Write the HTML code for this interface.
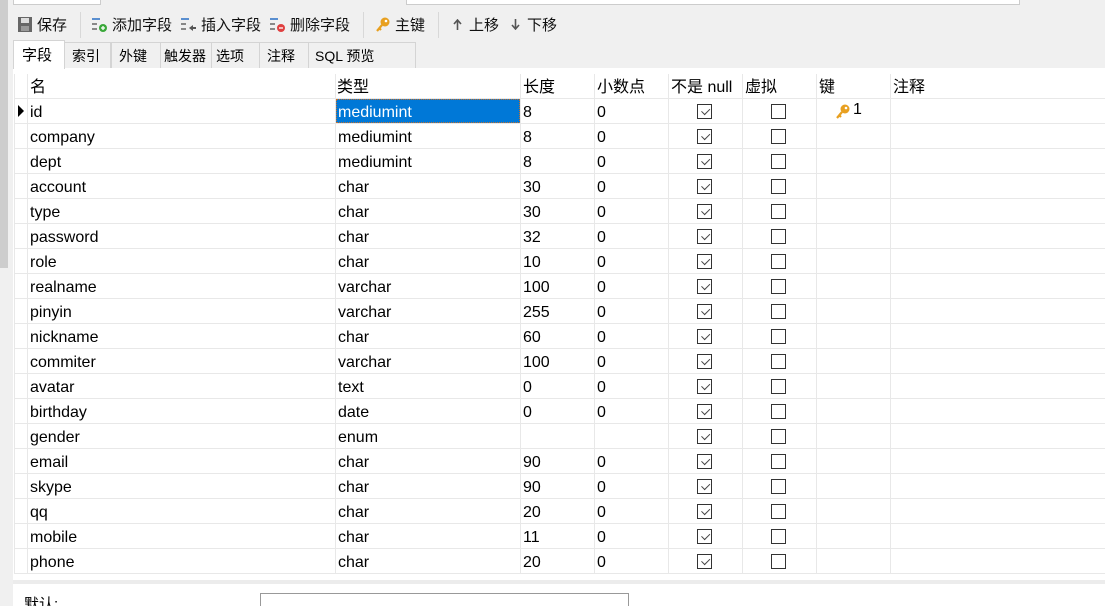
<!DOCTYPE html>
<html><head><meta charset="utf-8"><style>
*{margin:0;padding:0;box-sizing:border-box}
html,body{width:1105px;height:606px;overflow:hidden}
body{background:#f0f0f0;font-family:"Segoe UI","Liberation Sans","Noto Sans CJK SC",sans-serif;font-size:15px;color:#000;position:relative}
.a{position:absolute}
.tb{position:absolute;top:14px;font-size:15px;white-space:nowrap;color:#111}
.sep{position:absolute;top:12px;width:1px;height:26px;background:#d8d8d8}
.tab{position:absolute;top:42px;height:26px;border:1px solid #d4d4d4;border-bottom:none;background:#f0f0f0;padding:3px 0 0 7px;font-size:14px;white-space:nowrap;overflow:hidden}
.grid{position:absolute;left:13px;top:68px;width:1092px;height:506px;background:#fff}
.row{position:absolute;left:14px;width:1091px;height:25px;border-bottom:1px solid #e8e8e8;font-size:16px}
.c{position:absolute;top:5px;white-space:nowrap;line-height:18px}
.v{position:absolute;top:74px;width:1px;height:499px;background:#e8e8e8}
.cb{position:absolute;width:15px;height:15px;border:1px solid #333;background:#fff}
.ck::after{content:"";position:absolute;left:3px;top:1px;width:7px;height:4px;border-left:1.3px solid #444;border-bottom:1.3px solid #444;transform:rotate(-45deg) translate(-1px,2px)}
</style></head><body>
<div class="a" style="left:0;top:0;width:8px;height:268px;background:#cdcdcd"></div>
<div class="a" style="left:13px;top:0;width:88px;height:5px;background:#fff;border:1px solid #ccc;border-top:none"></div>
<div class="a" style="left:406px;top:0;width:614px;height:5px;background:#fff;border:1px solid #ccc;border-top:none"></div>

<svg class="a" style="left:18px;top:17px" width="14" height="15"><rect x="0" y="0" width="14" height="15" fill="#666"/><rect x="3" y="1" width="8" height="5" fill="#ddd"/><rect x="3" y="9" width="8" height="5" fill="#999"/></svg>
<div class="tb" style="left:37px">保存</div>
<div class="sep" style="left:80px"></div>
<svg class="a" style="left:92px;top:17px" width="16" height="16"><rect x="0" y="1" width="8" height="2" fill="#5a8fd0"/><rect x="0" y="6" width="5" height="2" fill="#888"/><rect x="0" y="11" width="5" height="2" fill="#888"/><circle cx="11" cy="11" r="4" fill="#3aa83a"/><path d="M9 11h4M11 9v4" stroke="#fff" stroke-width="1.3"/></svg>
<div class="tb" style="left:112px">添加字段</div>
<svg class="a" style="left:181px;top:17px" width="16" height="16"><rect x="0" y="1" width="8" height="2" fill="#5a8fd0"/><rect x="0" y="6" width="5" height="2" fill="#888"/><rect x="0" y="11" width="5" height="2" fill="#888"/><path d="M8 11l4-3v6z" fill="#555"/><rect x="11" y="10" width="4" height="2" fill="#555"/></svg>
<div class="tb" style="left:201px">插入字段</div>
<svg class="a" style="left:270px;top:17px" width="16" height="16"><rect x="0" y="1" width="8" height="2" fill="#5a8fd0"/><rect x="0" y="6" width="5" height="2" fill="#888"/><rect x="0" y="11" width="5" height="2" fill="#888"/><circle cx="11" cy="11" r="4" fill="#e04040"/><path d="M9 11h4" stroke="#fff" stroke-width="1.3"/></svg>
<div class="tb" style="left:290px">删除字段</div>
<div class="sep" style="left:363px"></div>
<svg class="a" style="left:376px;top:17px" width="14" height="16"><circle cx="9" cy="5" r="4.5" fill="#e8a020"/><circle cx="10" cy="4" r="1.3" fill="#fff"/><path d="M6 8l-5 6M3 11l2 2" stroke="#e8a020" stroke-width="2.2"/></svg>
<div class="tb" style="left:395px">主键</div>
<div class="sep" style="left:438px"></div>
<svg class="a" style="left:453px;top:19px" width="9" height="11"><path d="M4.5 1v10M1 5l3.5-4 3.5 4" stroke="#555" stroke-width="1.6" fill="none"/></svg>
<div class="tb" style="left:469px">上移</div>
<svg class="a" style="left:511px;top:19px" width="9" height="11"><path d="M4.5 0v10M1 6l3.5 4 3.5-4" stroke="#555" stroke-width="1.6" fill="none"/></svg>
<div class="tb" style="left:527px">下移</div>

<div class="tab" style="left:64px;width:47px">索引</div>
<div class="tab" style="left:111px;width:50px">外键</div>
<div class="tab" style="left:160px;width:52px;padding-left:3px">触发器</div>
<div class="tab" style="left:211px;width:49px;padding-left:4px">选项</div>
<div class="tab" style="left:259px;width:50px;padding-left:7px">注释</div>
<div class="tab" style="left:308px;width:108px;padding-left:6px">SQL 预览</div>
<div class="a" style="left:13px;top:40px;width:52px;height:29px;background:#fff;border:1px solid #d4d4d4;border-bottom:none;padding:3px 0 0 8px;z-index:2">字段</div>

<div class="grid"></div>
<div class="row" style="top:74px">
<div class="c" style="left:16px">名</div><div class="c" style="left:323px">类型</div><div class="c" style="left:509px">长度</div><div class="c" style="left:583px">小数点</div><div class="c" style="left:657px">不是 null</div><div class="c" style="left:731px">虚拟</div><div class="c" style="left:805px">键</div><div class="c" style="left:879px">注释</div>
</div>
<div class="v" style="left:27px"></div>
<div class="v" style="left:335px"></div><div class="v" style="left:520px"></div><div class="v" style="left:594px"></div><div class="v" style="left:668px"></div><div class="v" style="left:742px"></div><div class="v" style="left:816px"></div><div class="v" style="left:890px"></div>
<div class="a" style="left:14px;top:74px;width:1px;height:499px;background:#e8e8e8"></div>

<svg class="a" style="left:18px;top:105px" width="6" height="12"><path d="M0 0L6 6L0 12z" fill="#000"/></svg>
<div class="a" style="left:336px;top:99px;width:184px;height:24px;background:#0078d7;border:1px dotted #c07030"></div>

<div class="row" style="top:99px"><div class="c" style="left:16px">id</div><div class="c" style="left:324px;color:#fff">mediumint</div><div class="c" style="left:509px">8</div><div class="c" style="left:583px">0</div>
<svg class="a" style="left:822px;top:5px" width="14" height="16"><circle cx="9" cy="5" r="4.5" fill="#e8a020"/><circle cx="10" cy="4" r="1.3" fill="#fff"/><path d="M6 8l-5 6M3 11l2 2" stroke="#e8a020" stroke-width="2.2"/></svg><div class="c" style="left:839px;top:2px">1</div></div>
<div class="row" style="top:124px"><div class="c" style="left:16px">company</div><div class="c" style="left:324px">mediumint</div><div class="c" style="left:509px">8</div><div class="c" style="left:583px">0</div></div>
<div class="row" style="top:149px"><div class="c" style="left:16px">dept</div><div class="c" style="left:324px">mediumint</div><div class="c" style="left:509px">8</div><div class="c" style="left:583px">0</div></div>
<div class="row" style="top:174px"><div class="c" style="left:16px">account</div><div class="c" style="left:324px">char</div><div class="c" style="left:509px">30</div><div class="c" style="left:583px">0</div></div>
<div class="row" style="top:199px"><div class="c" style="left:16px">type</div><div class="c" style="left:324px">char</div><div class="c" style="left:509px">30</div><div class="c" style="left:583px">0</div></div>
<div class="row" style="top:224px"><div class="c" style="left:16px">password</div><div class="c" style="left:324px">char</div><div class="c" style="left:509px">32</div><div class="c" style="left:583px">0</div></div>
<div class="row" style="top:249px"><div class="c" style="left:16px">role</div><div class="c" style="left:324px">char</div><div class="c" style="left:509px">10</div><div class="c" style="left:583px">0</div></div>
<div class="row" style="top:274px"><div class="c" style="left:16px">realname</div><div class="c" style="left:324px">varchar</div><div class="c" style="left:509px">100</div><div class="c" style="left:583px">0</div></div>
<div class="row" style="top:299px"><div class="c" style="left:16px">pinyin</div><div class="c" style="left:324px">varchar</div><div class="c" style="left:509px">255</div><div class="c" style="left:583px">0</div></div>
<div class="row" style="top:324px"><div class="c" style="left:16px">nickname</div><div class="c" style="left:324px">char</div><div class="c" style="left:509px">60</div><div class="c" style="left:583px">0</div></div>
<div class="row" style="top:349px"><div class="c" style="left:16px">commiter</div><div class="c" style="left:324px">varchar</div><div class="c" style="left:509px">100</div><div class="c" style="left:583px">0</div></div>
<div class="row" style="top:374px"><div class="c" style="left:16px">avatar</div><div class="c" style="left:324px">text</div><div class="c" style="left:509px">0</div><div class="c" style="left:583px">0</div></div>
<div class="row" style="top:399px"><div class="c" style="left:16px">birthday</div><div class="c" style="left:324px">date</div><div class="c" style="left:509px">0</div><div class="c" style="left:583px">0</div></div>
<div class="row" style="top:424px"><div class="c" style="left:16px">gender</div><div class="c" style="left:324px">enum</div></div>
<div class="row" style="top:449px"><div class="c" style="left:16px">email</div><div class="c" style="left:324px">char</div><div class="c" style="left:509px">90</div><div class="c" style="left:583px">0</div></div>
<div class="row" style="top:474px"><div class="c" style="left:16px">skype</div><div class="c" style="left:324px">char</div><div class="c" style="left:509px">90</div><div class="c" style="left:583px">0</div></div>
<div class="row" style="top:499px"><div class="c" style="left:16px">qq</div><div class="c" style="left:324px">char</div><div class="c" style="left:509px">20</div><div class="c" style="left:583px">0</div></div>
<div class="row" style="top:524px"><div class="c" style="left:16px">mobile</div><div class="c" style="left:324px">char</div><div class="c" style="left:509px">11</div><div class="c" style="left:583px">0</div></div>
<div class="row" style="top:549px"><div class="c" style="left:16px">phone</div><div class="c" style="left:324px">char</div><div class="c" style="left:509px">20</div><div class="c" style="left:583px">0</div></div>

<div class="cb ck" style="left:697px;top:104px"></div><div class="cb" style="left:771px;top:104px"></div>
<div class="cb ck" style="left:697px;top:129px"></div><div class="cb" style="left:771px;top:129px"></div>
<div class="cb ck" style="left:697px;top:154px"></div><div class="cb" style="left:771px;top:154px"></div>
<div class="cb ck" style="left:697px;top:179px"></div><div class="cb" style="left:771px;top:179px"></div>
<div class="cb ck" style="left:697px;top:204px"></div><div class="cb" style="left:771px;top:204px"></div>
<div class="cb ck" style="left:697px;top:229px"></div><div class="cb" style="left:771px;top:229px"></div>
<div class="cb ck" style="left:697px;top:254px"></div><div class="cb" style="left:771px;top:254px"></div>
<div class="cb ck" style="left:697px;top:279px"></div><div class="cb" style="left:771px;top:279px"></div>
<div class="cb ck" style="left:697px;top:304px"></div><div class="cb" style="left:771px;top:304px"></div>
<div class="cb ck" style="left:697px;top:329px"></div><div class="cb" style="left:771px;top:329px"></div>
<div class="cb ck" style="left:697px;top:354px"></div><div class="cb" style="left:771px;top:354px"></div>
<div class="cb ck" style="left:697px;top:379px"></div><div class="cb" style="left:771px;top:379px"></div>
<div class="cb ck" style="left:697px;top:404px"></div><div class="cb" style="left:771px;top:404px"></div>
<div class="cb ck" style="left:697px;top:429px"></div><div class="cb" style="left:771px;top:429px"></div>
<div class="cb ck" style="left:697px;top:454px"></div><div class="cb" style="left:771px;top:454px"></div>
<div class="cb ck" style="left:697px;top:479px"></div><div class="cb" style="left:771px;top:479px"></div>
<div class="cb ck" style="left:697px;top:504px"></div><div class="cb" style="left:771px;top:504px"></div>
<div class="cb ck" style="left:697px;top:529px"></div><div class="cb" style="left:771px;top:529px"></div>
<div class="cb ck" style="left:697px;top:554px"></div><div class="cb" style="left:771px;top:554px"></div>

<div class="a" style="left:13px;top:574px;width:1092px;height:6px;background:#fff"></div>
<div class="a" style="left:13px;top:580px;width:1092px;height:4px;background:#ececec"></div>
<div class="a" style="left:13px;top:584px;width:1092px;height:22px;background:#fff;overflow:hidden">
<div class="a" style="left:11px;top:12px;font-size:15px;line-height:18px">默认:</div>
<div class="a" style="left:247px;top:9px;width:369px;height:20px;background:#fff;border:1px solid #999"></div>
</div>
</body></html>
